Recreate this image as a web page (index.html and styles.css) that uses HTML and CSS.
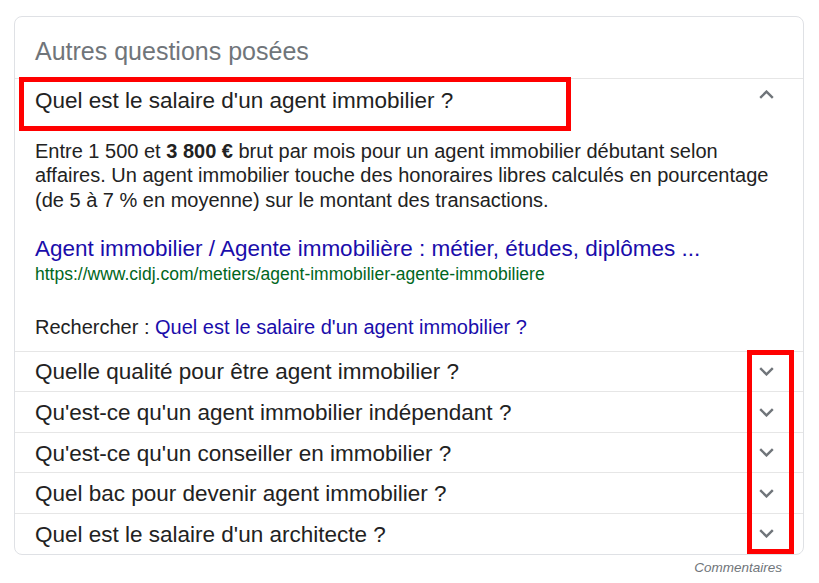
FILE: index.html
```html
<!DOCTYPE html>
<html lang="fr">
<head>
    <meta charset="UTF-8">
    <meta name="viewport" content="width=device-width, initial-scale=1.0">
    <title>Autres questions posées</title>
    <link rel="stylesheet" href="styles.css">
</head>
<body>

<div class="page">

    <!-- People also ask box -->
    <div class="paa">
        <div class="paa-title">Autres questions posées</div>

        <!-- Open question -->
        <div class="q-open">
            <span class="q-text">Quel est le salaire d'un agent immobilier ?</span>
            <svg class="chev" width="15" height="9" viewBox="0 0 15 9"><polyline points="1.2,7.8 7.5,1.6 13.8,7.8" fill="none" stroke="#70757a" stroke-width="2.4"/></svg>
        </div>
        <div class="answer">
            <p class="snippet">Entre 1 500 et <b>3 800 €</b> brut par mois pour un agent immobilier débutant selon affaires. Un agent immobilier touche des honoraires libres calculés en pourcentage (de 5 à 7 % en moyenne) sur le montant des transactions.</p>
            <a class="res-title" href="#">Agent immobilier / Agente immobilière : métier, études, diplômes ...</a>
            <div class="res-url">https://www.cidj.com/metiers/agent-immobilier-agente-immobiliere</div>
            <div class="search-for">Rechercher : <a href="#">Quel est le salaire d'un agent immobilier ?</a></div>
        </div>

        <!-- Closed questions -->
        <div class="q-row"><span class="q-text">Quelle qualité pour être agent immobilier ?</span><svg class="chev" width="15" height="9" viewBox="0 0 15 9"><polyline points="1.2,1.2 7.5,7.4 13.8,1.2" fill="none" stroke="#70757a" stroke-width="2.4"/></svg></div>
        <div class="q-row"><span class="q-text">Qu'est-ce qu'un agent immobilier indépendant ?</span><svg class="chev" width="15" height="9" viewBox="0 0 15 9"><polyline points="1.2,1.2 7.5,7.4 13.8,1.2" fill="none" stroke="#70757a" stroke-width="2.4"/></svg></div>
        <div class="q-row"><span class="q-text">Qu'est-ce qu'un conseiller en immobilier ?</span><svg class="chev" width="15" height="9" viewBox="0 0 15 9"><polyline points="1.2,1.2 7.5,7.4 13.8,1.2" fill="none" stroke="#70757a" stroke-width="2.4"/></svg></div>
        <div class="q-row"><span class="q-text">Quel bac pour devenir agent immobilier ?</span><svg class="chev" width="15" height="9" viewBox="0 0 15 9"><polyline points="1.2,1.2 7.5,7.4 13.8,1.2" fill="none" stroke="#70757a" stroke-width="2.4"/></svg></div>
        <div class="q-row"><span class="q-text">Quel est le salaire d'un architecte ?</span><svg class="chev" width="15" height="9" viewBox="0 0 15 9"><polyline points="1.2,1.2 7.5,7.4 13.8,1.2" fill="none" stroke="#70757a" stroke-width="2.4"/></svg></div>
    </div>

    <div class="feedback">Commentaires</div>

    <!-- Red highlight boxes drawn over the box -->
    <div class="mark mark-question"></div>
    <div class="mark mark-chevrons"></div>

</div>

</body>
</html>
```

FILE: styles.css
```css
body {
    margin: 0;
    font-family: "Liberation Sans", Arial, sans-serif;
    background-color: #fff;
    color: #222;
}
.page {
    position: relative;
    width: 819px;
    height: 583px;
    overflow: hidden;
}
.paa {
    box-sizing: border-box;
    width: 790px;
    margin: 16px 0 0 14px;
    border: 1px solid #dfe1e5;
    border-radius: 8px;
}
.paa-title {
    padding: 18px 20px 11px;
    font-size: 25px;
    line-height: 32px;
    color: #70757a;
    border-bottom: 1px solid #e6e6e6;
}
.q-text {
    font-size: 22.5px;
    line-height: 26px;
    color: #222;
}
.q-open {
    display: flex;
    justify-content: space-between;
    align-items: flex-start;
    padding: 9px 29px 0 20px;
}
.q-open .chev {
    margin-top: 2px;
}
.answer {
    padding: 25px 20px 11px;
}
.snippet {
    margin: 0;
    font-size: 20px;
    line-height: 24.4px;
}
.res-title {
    display: block;
    margin-top: 23px;
    font-size: 22.5px;
    line-height: 28px;
    color: #1a0dab;
    text-decoration: none;
}
.res-url {
    font-size: 17.5px;
    line-height: 22px;
    color: #006621;
}
.search-for {
    margin-top: 30px;
    font-size: 20px;
    line-height: 24.4px;
}
.search-for a {
    color: #1a0dab;
    text-decoration: none;
}
.q-row {
    box-sizing: border-box;
    height: 40.6px;
    display: flex;
    justify-content: space-between;
    align-items: center;
    padding: 0 29px 0 20px;
    border-top: 1px solid #e6e6e6;
}
.q-row .q-text {
    margin-top: 2px;
}
.feedback {
    width: 782px;
    margin-top: 4px;
    text-align: right;
    font-size: 13.5px;
    line-height: 18px;
    font-style: italic;
    color: #70757a;
}
.mark {
    position: absolute;
    box-sizing: border-box;
    border: 5px solid #ff0000;
}
.mark-question {
    left: 19px;
    top: 77px;
    width: 552px;
    height: 54px;
}
.mark-chevrons {
    left: 747px;
    top: 350px;
    width: 47px;
    height: 204px;
}
```
